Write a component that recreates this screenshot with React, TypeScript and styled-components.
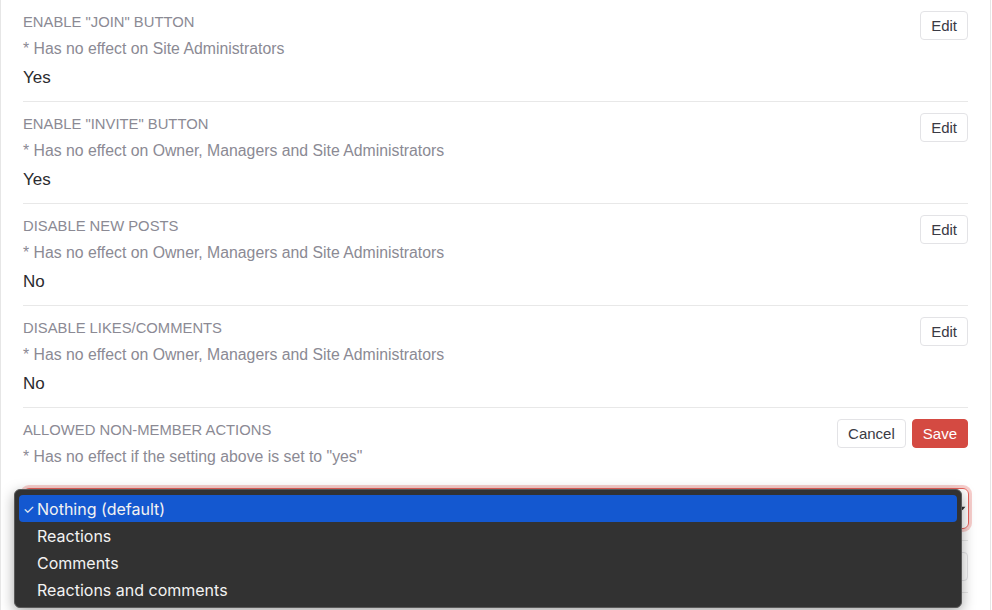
import React from "react";
import styled, { createGlobalStyle } from "styled-components";

const GlobalStyle = createGlobalStyle`
  html, body {
    margin: 0;
    padding: 0;
    background: #ffffff;
    font-family: "Liberation Sans", Arial, sans-serif;
  }
`;

type Setting = {
  label: string;
  hint: string;
  value: string;
};

const settings: Setting[] = [
  {
    label: 'Enable "Join" button',
    hint: "* Has no effect on Site Administrators",
    value: "Yes",
  },
  {
    label: 'Enable "Invite" button',
    hint: "* Has no effect on Owner, Managers and Site Administrators",
    value: "Yes",
  },
  {
    label: "Disable new posts",
    hint: "* Has no effect on Owner, Managers and Site Administrators",
    value: "No",
  },
  {
    label: "Disable likes/comments",
    hint: "* Has no effect on Owner, Managers and Site Administrators",
    value: "No",
  },
];

const options = ["Nothing (default)", "Reactions", "Comments", "Reactions and comments"];

const App: React.FC = () => {
  return (
    <>
      <GlobalStyle />
      <Panel>
        {settings.map((s) => (
          <Row key={s.label}>
            <Body>
              <Label>{s.label}</Label>
              <Hint>{s.hint}</Hint>
              <Value>{s.value}</Value>
            </Body>
            <Actions>
              <Button>Edit</Button>
            </Actions>
          </Row>
        ))}

        <Row>
          <Body>
            <Label>Allowed non-member actions</Label>
            <Hint>* Has no effect if the setting above is set to "yes"</Hint>
            <SelectWrap>
              <SelectBox>
                <Caret viewBox="0 0 8 6">
                  <path d="M0.5 1 L4 5 L7.5 1 Z" fill="#333" />
                </Caret>
              </SelectBox>
              {/* native select popup, open over the rows below */}
              <Menu>
                {options.map((o, i) => (
                  <MenuItem key={o} $active={i === 0}>
                    <Check>{i === 0 ? "✓" : ""}</Check>
                    {o}
                  </MenuItem>
                ))}
              </Menu>
            </SelectWrap>
          </Body>
          <Actions>
            <Button>Cancel</Button>
            <Button $primary>Save</Button>
          </Actions>
        </Row>

        <Row>
          <Body />
          <Actions>
            <Button>Edit</Button>
          </Actions>
        </Row>
      </Panel>
    </>
  );
};

const Panel = styled.div`
  box-sizing: border-box;
  width: 991px;
  height: 610px;
  overflow: hidden;
  padding: 0 22px;
  border-left: 1px solid #e6e6e6;
  border-right: 1px solid #e6e6e6;
  background: #fff;
`;

const Row = styled.div`
  display: flex;
  justify-content: space-between;
  align-items: flex-start;
  padding: 11px 0 11px;
  border-bottom: 1px solid #e8e8e8;
`;

const Body = styled.div`
  flex: 1;
  display: flex;
  flex-direction: column;
`;

const Label = styled.div`
  padding-top: 1px;
  font-size: 14.8px;
  line-height: 21px;
  text-transform: uppercase;
  color: #8b8a94;
`;

const Hint = styled.div`
  margin-top: 5px;
  font-size: 15.8px;
  line-height: 22px;
  color: #8b8a94;
`;

const Value = styled.div`
  margin-top: 6px;
  font-size: 17px;
  line-height: 24px;
  color: #2b2b2f;
`;

const Actions = styled.div`
  display: flex;
  gap: 6px;
`;

const Button = styled.button<{ $primary?: boolean }>`
  box-sizing: border-box;
  height: 29px;
  padding: 0 10px;
  border-radius: 4px;
  font-family: "Liberation Sans", Arial, sans-serif;
  font-size: 15px;
  cursor: pointer;
  border: 1px solid ${(p) => (p.$primary ? "#d44a42" : "#e3e3e6")};
  background: ${(p) => (p.$primary ? "#d44a42" : "#fff")};
  color: ${(p) => (p.$primary ? "#fff" : "#3a3a44")};
`;

const SelectWrap = styled.div`
  position: relative;
  margin-top: 20px;
  margin-right: -945px;
  width: 946px;
`;

const SelectBox = styled.div`
  box-sizing: border-box;
  height: 41px;
  display: flex;
  align-items: center;
  justify-content: flex-end;
  padding: 0 2px 0 12px;
  border: 1px solid #e8615a;
  border-radius: 6px;
  box-shadow: 0 0 0 3px rgba(232, 97, 90, 0.3);
`;

const Caret = styled.svg`
  width: 7px;
  height: 5px;
`;

const Menu = styled.div`
  position: absolute;
  left: -9px;
  top: 1px;
  width: 948px;
  box-sizing: border-box;
  padding: 5px 4px 4px;
  background: #323232;
  border: 1px solid #5a5a5a;
  border-radius: 6px;
  box-shadow: 0 4px 14px rgba(0, 0, 0, 0.35);
  font-family: Inter, Roboto, sans-serif;
`;

const MenuItem = styled.div<{ $active?: boolean }>`
  display: flex;
  align-items: center;
  height: 27px;
  padding: 0 4px;
  border-radius: 4px;
  font-size: 16px;
  color: #f2f2f2;
  background: ${(p) => (p.$active ? "#1458d0" : "transparent")};
`;

const Check = styled.span`
  width: 14px;
  font-size: 13px;
`;

export default App;
